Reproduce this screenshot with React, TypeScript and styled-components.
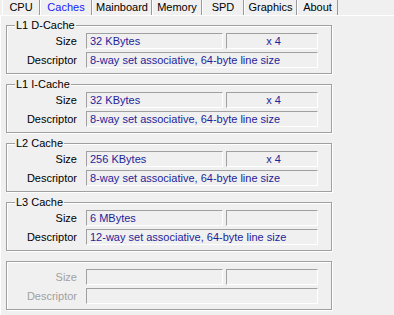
import React from "react";
import styled, { createGlobalStyle } from "styled-components";

const GlobalStyle = createGlobalStyle`
  html, body {
    margin: 0;
    padding: 0;
    background: #f0f0f0;
  }
  body {
    font-family: "Liberation Sans", Arial, sans-serif;
    font-size: 11px;
    color: #000;
  }
`;

const Window = styled.div`
  width: 394px;
  height: 315px;
  overflow: hidden;
  background: #f0f0f0;
`;

const TabBar = styled.div`
  display: flex;
  height: 15px;
  padding-left: 2px;
  border-bottom: 1px solid #ffffff;
`;

const Tab = styled.div<{ $width: number; $active?: boolean }>`
  width: ${(p) => p.$width}px;
  box-sizing: border-box;
  display: flex;
  align-items: center;
  justify-content: center;
  border-left: 1px solid #ffffff;
  border-right: 1px solid #9a9a9a;
  color: ${(p) => (p.$active ? "#1a1aff" : "#000")};
  line-height: 15px;
`;

const Page = styled.div`
  width: 326px;
  padding: 9px 0 0 5px;
  border-left: 1px solid #ffffff;
  height: 298px;
`;

const Group = styled.div`
  position: relative;
  border: 1px solid #a0a0a0;
  box-shadow: inset 1px 1px 0 #ffffff, 1px 1px 0 #ffffff;
  padding: 7px 0 5px 0;
  margin-bottom: 10px;
  display: grid;
  grid-template-columns: 76px 137px 92px;
  grid-auto-rows: 16px;
  column-gap: 3px;
  row-gap: 3px;
`;

const Legend = styled.div`
  position: absolute;
  left: 8px;
  top: -7px;
  padding: 0 1px;
  background: #f0f0f0;
  line-height: 13px;
`;

const Label = styled.div<{ $disabled?: boolean }>`
  text-align: right;
  padding-right: 6px;
  line-height: 16px;
  color: ${(p) => (p.$disabled ? "#a0a0a0" : "#000")};
`;

const Field = styled.div<{ $span?: number; $center?: boolean }>`
  grid-column: span ${(p) => p.$span ?? 1};
  box-sizing: border-box;
  border-top: 1px solid #a0a0a0;
  border-left: 1px solid #a0a0a0;
  border-bottom: 1px solid #ffffff;
  border-right: 1px solid #ffffff;
  padding-left: 3px;
  line-height: 14px;
  color: #1e1e9a;
  text-align: ${(p) => (p.$center ? "center" : "left")};
  white-space: nowrap;
  overflow: hidden;
`;

type CacheInfo = {
  name: string;
  size: string;
  count: string;
  descriptor: string;
};

const caches: CacheInfo[] = [
  { name: "L1 D-Cache", size: "32 KBytes", count: "x 4", descriptor: "8-way set associative, 64-byte line size" },
  { name: "L1 I-Cache", size: "32 KBytes", count: "x 4", descriptor: "8-way set associative, 64-byte line size" },
  { name: "L2 Cache", size: "256 KBytes", count: "x 4", descriptor: "8-way set associative, 64-byte line size" },
  { name: "L3 Cache", size: "6 MBytes", count: "", descriptor: "12-way set associative, 64-byte line size" },
];

const tabs: [string, number][] = [
  ["CPU", 38],
  ["Caches", 52],
  ["Mainboard", 60],
  ["Memory", 50],
  ["SPD", 42],
  ["Graphics", 53],
  ["About", 41],
];

const CacheGroup = ({ info, disabled }: { info?: CacheInfo; disabled?: boolean }) => (
  <Group>
    {info && <Legend>{info.name}</Legend>}
    <Label $disabled={disabled}>Size</Label>
    <Field>{info?.size}</Field>
    <Field $center>{info?.count}</Field>
    <Label $disabled={disabled}>Descriptor</Label>
    <Field $span={2}>{info?.descriptor}</Field>
  </Group>
);

export default function App() {
  return (
    <Window>
      <GlobalStyle />
      <TabBar>
        {tabs.map(([name, w]) => (
          <Tab key={name} $width={w} $active={name === "Caches"}>
            {name}
          </Tab>
        ))}
      </TabBar>
      <Page>
        {caches.map((c) => (
          <CacheGroup key={c.name} info={c} />
        ))}
        <CacheGroup disabled />
      </Page>
    </Window>
  );
}
